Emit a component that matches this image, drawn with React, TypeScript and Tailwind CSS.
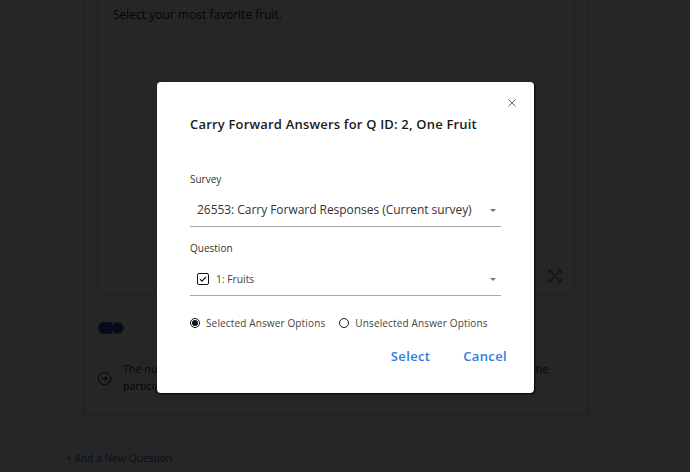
import { ArrowRightCircle } from 'lucide-react'

const font = { fontFamily: '"Open Sans", "Noto Sans", sans-serif' }

function Caret() {
  return <span className="h-0 w-0 border-x-[3px] border-t-[3px] border-x-transparent border-t-[#757575]" />
}

function Radio({ checked, label }: { checked?: boolean; label: string }) {
  return (
    <label className="flex items-center gap-[6px]">
      <span className="flex h-[10px] w-[10px] items-center justify-center rounded-full border border-[#111]">
        {checked && <span className="h-[6px] w-[6px] rounded-full bg-[#111]" />}
      </span>
      <span className="text-[10px] leading-[14px] tracking-[0.14px] text-[#444]">{label}</span>
    </label>
  )
}

function Background() {
  return (
    <div className="h-[472px] overflow-hidden bg-white pl-[83px] pr-[101px] text-[#222]">
      <div className="h-[415px] rounded-b-[3px] border-x border-b border-[#b9bfe0] px-[13px]">
        <div className="flex h-[295px] flex-col rounded-b-[3px] border-x border-b border-[#d4d4d4] pl-[15px] pr-[12px] pt-[7px]">
          <p className="text-[12px] leading-[16px]">Select your most favorite fruit.</p>
          <div className="mt-auto mb-[11px] flex justify-end">
            <svg width="14" height="14" viewBox="0 0 14 14" fill="none" stroke="#777" strokeWidth="1.1">
              <path d="M1 1l12 12M13 1L1 13M1 5V1h4M9 1h4v4M1 9v4h4M13 9v4H9" />
            </svg>
          </div>
        </div>
        <div className="mt-[27px] flex pl-[1px]">
          <span className="h-[12px] w-[14px] rounded-l-full bg-[#1d4ea8]" />
          <span className="-ml-[1px] h-[12px] w-[13px] rounded-full border border-[#6f8fcc] bg-[#1d4ea8]" />
        </div>
        <div className="mt-[27px] flex items-center gap-[11px]">
          <ArrowRightCircle size={15} strokeWidth={1.4} className="text-black" />
          <p className="w-[432px] text-[10.5px] leading-[17px] tracking-[0.13px]">
            The number of answer options carried forward depends on what was selected by the participant.
          </p>
        </div>
      </div>
      <p className="mt-[35px] -ml-[17px] text-[10.25px] leading-[16px] text-[#2f6bd6]">+ Add a New Question</p>
    </div>
  )
}

export default function App() {
  return (
    <div style={font} className="relative h-[472px] overflow-hidden">
      <Background />
      <div className="absolute inset-0 bg-black/85" />
      <div
        role="dialog"
        className="absolute left-[157px] top-[82px] h-[311px] w-[377px] rounded-[4px] bg-white px-[33px] shadow-[1px_1px_2px_rgba(0,0,0,0.9)]"
      >
        <div className="flex justify-end pt-[17px]">
          <svg width="8" height="8" viewBox="0 0 8 8" className="-mr-[15px]" stroke="#666" strokeWidth="1" fill="none">
            <path d="M.5.5l7 7M7.5.5l-7 7" />
          </svg>
        </div>
        <h2 className="mt-[7px] text-[13px] font-semibold leading-[20px] tracking-[0.19px] text-[#1a1a1a]">
          Carry Forward Answers for Q ID: 2, One Fruit
        </h2>
        <div className="mt-[38px] text-[10px] leading-[14px] text-[#333]">Survey</div>
        <div className="mt-[8px] flex h-[33px] items-center justify-between border-b border-[#a8a8a8] pl-[7px] pr-[5px]">
          <span className="text-[12px] leading-[16px] tracking-[-0.04px] text-[#333]">26553: Carry Forward Responses (Current survey)</span>
          <Caret />
        </div>
        <div className="mt-[14px] text-[10px] leading-[14px] text-[#333]">Question</div>
        <div className="mt-[8px] flex h-[33px] items-center justify-between border-b border-[#a8a8a8] pl-[7px] pr-[5px]">
          <span className="flex items-center gap-[7px]">
            <span className="flex h-[12px] w-[12px] items-center justify-center rounded-[2px] border-[1.5px] border-[#111]">
              <svg width="8" height="8" viewBox="0 0 8 8" fill="none" stroke="#111" strokeWidth="1.2">
                <path d="M1 4.2l2 2 4-4.4" />
              </svg>
            </span>
            <span className="text-[10.3px] leading-[14px] text-[#444]">1: Fruits</span>
          </span>
          <Caret />
        </div>
        <div className="mt-[20px] flex gap-[14px]">
          <Radio checked label="Selected Answer Options" />
          <Radio label="Unselected Answer Options" />
        </div>
        <div className="mt-[17px] -mr-[6px] flex justify-end gap-[33px] text-[13px] font-semibold leading-[18px] tracking-[0.35px] text-[#2f7ae5]">
          <button type="button">Select</button>
          <button type="button">Cancel</button>
        </div>
      </div>
    </div>
  )
}
